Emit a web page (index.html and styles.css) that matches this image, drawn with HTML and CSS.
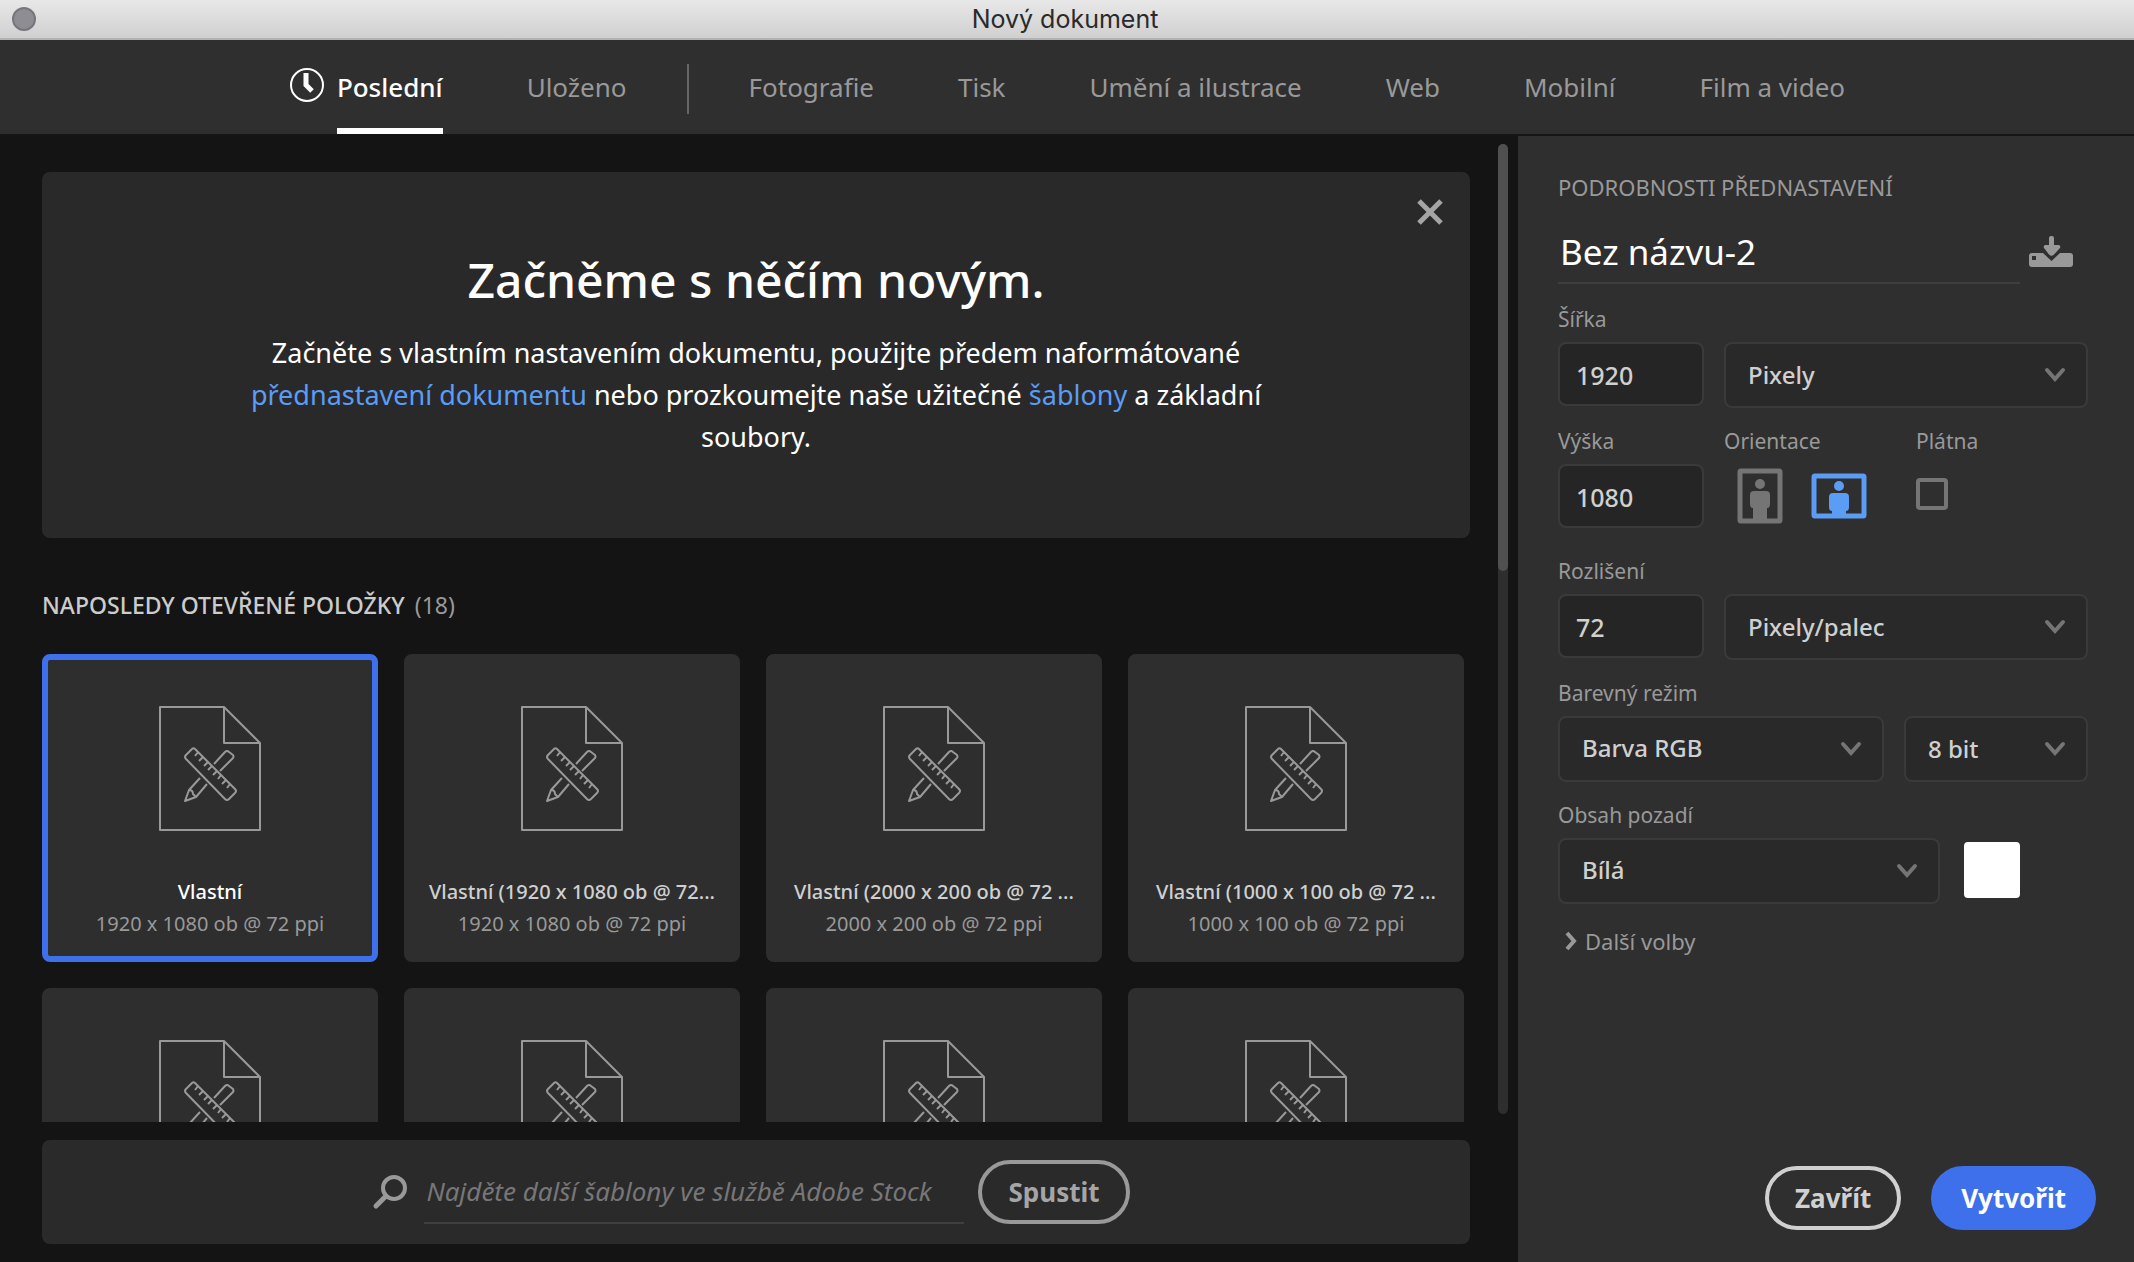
FILE: index.html
```html
<!DOCTYPE html>
<html lang="cs">
<head>
<meta charset="utf-8">
<title>Nový dokument</title>
<link rel="stylesheet" href="styles.css">
</head>
<body>
<svg class="sprite" aria-hidden="true">
  <symbol id="doc" viewBox="0 0 104 128">
    <path d="M2 3H66L102 39V126H2ZM66 3V39H102"/>
    <path d="M37 45L77 85Q79 87 77 89L71 95Q69 97 67 95L28 55Q26 53 28 51L34 45Q35.500 43.500 37 45ZM40 48L37 52M45 53L41 57M50 58L46 62M54 62L50 66M59 67L55 71M63 71L60 75M68 76L64 80M72 80L69 84"/>
    <path d="M56 60L67 48Q69 46 71 48L75 51Q76 53 75 54L62 67M42 74L31 86L27 97L38 93L49 80M31 86Q35 86 35 90L38 93"/>
  </symbol>
  <symbol id="chevron" viewBox="0 0 22 16"><path d="M3 3L11 12L19 3"/></symbol>
</svg>
<div class="window">
  <header class="titlebar">
    <button class="dot" type="button" aria-label="Zavřít okno"></button>
    <h1 class="window-title">Nový dokument</h1>
  </header>
  <nav class="tabs">
    <svg class="clock" viewBox="0 0 36 36" aria-hidden="true"><circle cx="18" cy="18" r="16"/><path d="M17 6V18L23 24"/></svg>
    <a class="tab active" href="#posledni">Poslední</a>
    <a class="tab" href="#ulozeno">Uloženo</a>
    <span class="divider"></span>
    <a class="tab" href="#fotografie">Fotografie</a>
    <a class="tab" href="#tisk">Tisk</a>
    <a class="tab" href="#umeni">Umění a ilustrace</a>
    <a class="tab" href="#web">Web</a>
    <a class="tab" href="#mobilni">Mobilní</a>
    <a class="tab" href="#film">Film a video</a>
  </nav>
  <div class="content">
    <main class="browser">
      <div class="scroll">
        <div class="scroll-body">
          <section class="hero">
            <button class="close" type="button" aria-label="Zavřít"><svg viewBox="0 0 28 28"><path d="M3 3L25 25M25 3L3 25"/></svg></button>
            <h2 class="hero-title">Začněme s něčím novým.</h2>
            <p class="hero-text">Začněte s vlastním nastavením dokumentu, použijte předem naformátované <a href="#prednastaveni">přednastavení dokumentu</a> nebo prozkoumejte naše užitečné <a href="#sablony">šablony</a> a základní soubory.</p>
          </section>
          <h2 class="section-title">NAPOSLEDY OTEVŘENÉ POLOŽKY <span class="count">(18)</span></h2>
          <div class="cards">
            <button class="card selected" type="button"><svg class="doc"><use href="#doc"/></svg><span class="name">Vlastní</span><span class="size">1920 x 1080 ob @ 72 ppi</span></button>
            <button class="card" type="button"><svg class="doc"><use href="#doc"/></svg><span class="name">Vlastní (1920 x 1080 ob @ 72...</span><span class="size">1920 x 1080 ob @ 72 ppi</span></button>
            <button class="card" type="button"><svg class="doc"><use href="#doc"/></svg><span class="name">Vlastní (2000 x 200 ob @ 72 ...</span><span class="size">2000 x 200 ob @ 72 ppi</span></button>
            <button class="card" type="button"><svg class="doc"><use href="#doc"/></svg><span class="name">Vlastní (1000 x 100 ob @ 72 ...</span><span class="size">1000 x 100 ob @ 72 ppi</span></button>
            <button class="card" type="button" aria-label="Vlastní"><svg class="doc"><use href="#doc"/></svg></button>
            <button class="card" type="button" aria-label="Vlastní"><svg class="doc"><use href="#doc"/></svg></button>
            <button class="card" type="button" aria-label="Vlastní"><svg class="doc"><use href="#doc"/></svg></button>
            <button class="card" type="button" aria-label="Vlastní"><svg class="doc"><use href="#doc"/></svg></button>
          </div>
        </div>
        <div class="track"><div class="thumb"></div></div>
      </div>
      <form class="search">
        <svg class="magnifier" viewBox="0 0 36 36" aria-hidden="true"><circle cx="22" cy="14" r="11"/><path d="M14 22L4 32"/></svg>
        <input class="search-input" type="text" aria-label="Hledat šablony" placeholder="Najděte další šablony ve službě Adobe Stock">
        <button class="pill quiet" type="button">Spustit</button>
      </form>
    </main>
    <aside class="panel">
      <h2 class="panel-title">PODROBNOSTI PŘEDNASTAVENÍ</h2>
      <div class="name-row">
        <input class="doc-name" type="text" value="Bez názvu-2" aria-label="Název dokumentu">
        <button class="save" type="button" aria-label="Uložit přednastavení"><svg viewBox="0 0 44 32"><path d="M20 2Q20 0 22 0H23Q25 0 25 2V9H30Q32 10 31 12L25 18.500Q22.500 21 20 18.500L15 12Q14 10 16 9H20Z"/><path fill-rule="evenodd" d="M3 17H14L22.500 25L31 17H41Q44 17 44 20V28Q44 31 41 31H3Q0 31 0 28V20Q0 17 3 17ZM3 20V24H7V20Z"/></svg></button>
      </div>
      <div class="fields">
        <div class="row">
          <div class="field small">
            <label for="width">Šířka</label>
            <input class="number" id="width" type="text" value="1920">
          </div>
          <div class="select grow">
            <select aria-label="Jednotky"><option>Pixely</option></select>
            <svg class="chevron"><use href="#chevron"/></svg>
          </div>
        </div>
        <div class="row tall">
          <div class="field small">
            <label for="height">Výška</label>
            <input class="number" id="height" type="text" value="1080">
          </div>
          <div class="field orientation">
            <span class="label">Orientace</span>
            <div class="orient-buttons">
              <button class="orient" type="button" aria-label="Na výšku"><svg width="46" height="56" viewBox="0 0 46 56"><rect class="frame" x="3" y="3" width="40" height="50" rx="1"/><circle cx="23" cy="16" r="5"/><path d="M17 23H29Q33 23 33 27V36Q33 40 30 40V52H16V40Q13 40 13 36V27Q13 23 17 23Z"/></svg></button>
              <button class="orient on" type="button" aria-label="Na šířku"><svg width="56" height="46" viewBox="0 0 56 46"><rect class="frame" x="3" y="3" width="50" height="40" rx="1"/><circle cx="28" cy="13" r="5"/><path d="M22 20H34Q38 20 38 24V34Q38 38 35 38V42H21V38Q18 38 18 34V24Q18 20 22 20Z"/></svg></button>
            </div>
          </div>
          <div class="field">
            <label for="artboards">Plátna</label>
            <div class="check-row"><input class="check" id="artboards" type="checkbox"></div>
          </div>
        </div>
        <div class="row">
          <div class="field small">
            <label for="resolution">Rozlišení</label>
            <input class="number" id="resolution" type="text" value="72">
          </div>
          <div class="select grow">
            <select aria-label="Jednotky rozlišení"><option>Pixely/palec</option></select>
            <svg class="chevron"><use href="#chevron"/></svg>
          </div>
        </div>
        <div class="row">
          <div class="field grow">
            <label for="mode">Barevný režim</label>
            <div class="select">
              <select id="mode"><option>Barva RGB</option></select>
              <svg class="chevron"><use href="#chevron"/></svg>
            </div>
          </div>
          <div class="select depth">
            <select aria-label="Bitová hloubka"><option>8 bit</option></select>
            <svg class="chevron"><use href="#chevron"/></svg>
          </div>
        </div>
        <div class="row">
          <div class="field background">
            <label for="background">Obsah pozadí</label>
            <div class="select">
              <select id="background"><option>Bílá</option></select>
              <svg class="chevron"><use href="#chevron"/></svg>
            </div>
          </div>
          <button class="swatch" type="button" aria-label="Barva pozadí"></button>
        </div>
      </div>
      <button class="more" type="button"><svg viewBox="0 0 12 20"><path d="M2 2L9 10L2 18"/></svg>Další volby</button>
      <div class="actions">
        <button class="pill" type="button">Zavřít</button>
        <button class="pill primary" type="button">Vytvořit</button>
      </div>
    </aside>
  </div>
</div>
</body>
</html>
```
FILE: styles.css
```css
* { box-sizing: border-box; }

body {
  margin: 0;
  background: #141414;
  color: #d0d0d0;
  font-family: "Noto Sans", sans-serif;
  font-size: 20px;
}

h1, h2, p { margin: 0; font-weight: 400; }

button, input, select { font: inherit; color: inherit; margin: 0; }

button { background: none; border: 0; padding: 0; }

svg { display: block; fill: none; stroke: currentColor; }

.sprite { position: absolute; width: 0; height: 0; }

.window { display: flex; flex-direction: column; height: 100vh; }

/* Title bar */
.titlebar {
  display: grid;
  grid-template-columns: 24px 1fr 28px;
  align-items: center;
  flex: none;
  height: 40px;
  padding: 0 12px;
  background: linear-gradient(#e8e8e8, #d0d0d0);
  border-bottom: 2px solid #b2b2b2;
}

.dot { width: 24px; height: 24px; border: 2px solid #77767c; border-radius: 50%; background: #8e8d94; }

.window-title { color: #2a2a2a; font-family: Inter, sans-serif; font-size: 25px; line-height: 36px; text-align: center; }

/* Tabs */
.tabs {
  display: flex;
  justify-content: center;
  flex: none;
  gap: 84px;
  height: 94px;
  background: #2f2f2f;
  color: #999;
}

.tab {
  display: flex;
  align-items: center;
  border-bottom: 6px solid transparent;
  padding-top: 6px;
  color: inherit;
  font-size: 26px;
  text-decoration: none;
}

.tab.active { border-color: #fff; color: #fff; font-weight: 500; }

.clock { width: 36px; height: 36px; margin: 27px -72px 0 0; color: #fff; stroke-width: 2; }
.clock path { stroke-width: 5; }

.divider { width: 2px; height: 50px; margin: 24px -24px 0; background: #666; }

.content { display: flex; flex: 1; min-height: 0; }

/* Preset browser */
.browser { display: flex; flex: 1; flex-direction: column; min-width: 0; padding-bottom: 18px; }

.scroll { display: flex; flex: 1; gap: 28px; min-height: 0; padding-right: 10px; }

.scroll-body { flex: 1; overflow: hidden; padding: 38px 0 0 42px; }

.track { width: 10px; margin: 10px 0 8px; border-radius: 5px; background: #2e2e2e; }

.thumb { height: 44%; border-radius: 5px; background: #505050; }

.hero {
  display: flex;
  flex-direction: column;
  align-items: center;
  height: 366px;
  padding: 26px;
  border-radius: 8px;
  background: #292929;
  color: #fff;
  text-align: center;
}

.close { align-self: flex-end; color: #a5a5a5; }
.close svg { width: 28px; height: 28px; stroke-width: 5; }

.hero-title { margin-top: 18px; font-size: 48px; font-weight: 500; line-height: 72px; }

.hero-text { max-width: 1040px; margin-top: 16px; font-size: 27px; line-height: 42px; }
.hero-text a { color: #5b9cf5; text-decoration: none; }

.section-title { margin: 52px 0 34px; color: #ccc; font-size: 23px; font-weight: 500; line-height: 30px; }

.count { margin-left: 4px; color: #999; font-weight: 400; }

.cards { display: grid; grid-template-columns: repeat(4, 1fr); gap: 26px; margin-right: 6px; }

.card {
  display: flex;
  flex-direction: column;
  align-items: center;
  height: 308px;
  padding-top: 46px;
  border: 4px solid #2e2e2e;
  border-radius: 8px;
  background: #2e2e2e;
  overflow: hidden;
  white-space: nowrap;
}

.card.selected { border-width: 6px; border-color: #3d70ea; padding-top: 44px; color: #fff; }

.doc { width: 104px; height: 128px; color: #999; stroke-width: 2; stroke-linejoin: round; }

.name { margin-top: 44px; font-weight: 500; line-height: 32px; }

.size { color: #999; line-height: 32px; }

/* Stock search */
.search {
  display: flex;
  align-items: center;
  justify-content: center;
  height: 104px;
  margin: 18px 48px 0 42px;
  padding-right: 10px;
  border-radius: 8px;
  background: #2a2a2a;
  color: #999;
}

.magnifier { width: 36px; height: 36px; margin-right: 16px; stroke-width: 4; }
.magnifier path { stroke-width: 5; stroke-linecap: round; }

.search-input {
  width: 540px;
  height: 64px;
  margin-right: 14px;
  padding: 0 2px;
  border: 0;
  border-bottom: 2px solid #3f3f3f;
  background: none;
  font-size: 26px;
  font-style: italic;
}
.search-input::placeholder { color: #777; opacity: 1; }

.pill { height: 64px; padding: 0 26px; border: 4px solid #d0d0d0; border-radius: 32px; font-size: 26px; font-weight: 700; }
.pill.quiet { border-color: #999; color: #a5a5a5; }
.pill.primary { border-color: #3d70ea; background: #3d70ea; color: #fff; }

/* Details panel */
.panel {
  display: flex;
  flex-direction: column;
  flex: none;
  width: 616px;
  margin-top: 2px;
  padding: 36px 46px 32px 40px;
  background: #2f2f2f;
}

.panel-title { color: #999; font-size: 22px; line-height: 30px; }

.name-row { display: flex; align-items: center; gap: 9px; margin-top: 18px; }

.doc-name {
  width: 462px;
  height: 64px;
  padding: 0 2px;
  border: 0;
  border-bottom: 2px solid #3e3e3e;
  background: none;
  color: #fff;
  font-size: 35px;
}

.save { color: #999; }
.save svg { width: 44px; height: 32px; fill: currentColor; stroke: none; }

.fields { display: flex; flex-direction: column; gap: 16px; margin-top: 18px; }

.row { display: flex; align-items: flex-end; gap: 20px; }
.row.tall { align-items: flex-start; min-height: 114px; }

.field { display: flex; flex-direction: column; gap: 6px; color: #999; font-size: 21px; line-height: 34px; }
.small { width: 146px; }
.grow { flex: 1; }
.orientation { width: 172px; }
.depth { width: 184px; }
.background { width: 382px; }

.number {
  width: 100%;
  height: 64px;
  margin-bottom: 2px;
  padding: 2px 16px 0;
  border: 2px solid #3a3a3a;
  border-radius: 8px;
  background: #252525;
  color: #d0d0d0;
  font-size: 25px;
  font-weight: 500;
}

.select { display: grid; align-items: center; }

select {
  grid-area: 1 / 1;
  height: 66px;
  padding: 0 22px 2px;
  border: 2px solid #3a3a3a;
  border-radius: 8px;
  appearance: none;
  background: #292929;
  color: #d0d0d0;
  font-size: 24px;
  font-weight: 500;
}

.chevron {
  grid-area: 1 / 1;
  justify-self: end;
  width: 22px;
  height: 16px;
  margin-right: 22px;
  color: #757575;
  stroke-width: 4;
  stroke-linecap: round;
  pointer-events: none;
}

.orient-buttons { display: flex; align-items: center; gap: 28px; height: 64px; padding-left: 13px; }

.orient { color: #757575; }
.orient svg { fill: currentColor; stroke: none; }
.orient .frame { fill: none; stroke: currentColor; stroke-width: 5; }
.orient.on { color: #5b9cf5; }

.check-row { display: flex; align-items: center; height: 60px; }

.check { width: 32px; height: 32px; border: 4px solid #757575; border-radius: 4px; appearance: none; }

.swatch { width: 56px; height: 56px; margin: 0 0 6px 4px; border-radius: 4px; background: #fff; }

.more { display: flex; align-items: center; gap: 8px; margin: 21px 0 0 7px; color: #999; font-size: 22px; line-height: 32px; }
.more svg { width: 12px; height: 20px; stroke-width: 4; }

.actions { display: flex; justify-content: flex-end; gap: 30px; margin: auto -8px 0 0; }
```
